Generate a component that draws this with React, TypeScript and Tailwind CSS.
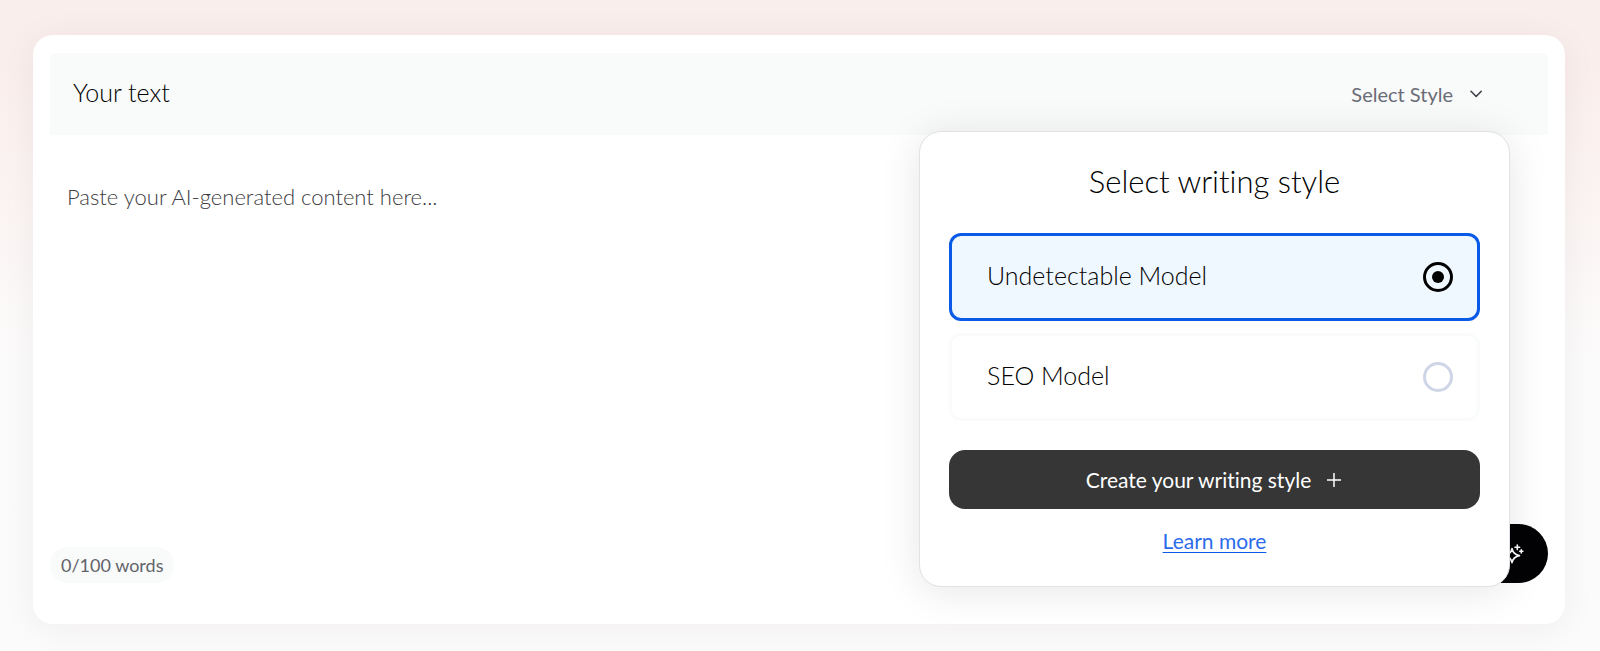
import { useState } from "react";

const models = ["Undetectable Model", "SEO Model"];

function ChevronIcon() {
  return (
    <svg width="14" height="14" viewBox="0 0 14 14" fill="none" stroke="#3f424d" strokeWidth="1.6" strokeLinecap="round" strokeLinejoin="round" aria-hidden="true">
      <path d="M2 4.300 7.200 9.500l5-5.200" />
    </svg>
  );
}

function PlusIcon() {
  return (
    <svg width="14" height="14" viewBox="0 0 14 14" stroke="#fff" strokeWidth="1.5" aria-hidden="true">
      <path d="M7 0v14M0 7h14" />
    </svg>
  );
}

function SparklesIcon() {
  return (
    <svg width="24" height="24" viewBox="0 0 24 24" fill="none" stroke="#fff" strokeWidth="1.6" strokeLinejoin="round" strokeLinecap="round" aria-hidden="true">
      <path d="M9 6.500c.9 4.500 2.800 6.200 7.500 7.100-4.700.9-6.600 2.600-7.500 7.100-.9-4.500-2.800-6.200-7.500-7.100 4.700-.9 6.600-2.600 7.500-7.100Z" />
      <path d="M14.300 3v4.600M12 5.300h4.600M18.300 7.700v3.200M16.700 9.300h3.200" />
    </svg>
  );
}

function StyleMenu() {
  const [selected, setSelected] = useState(models[0]);
  return (
    <section
      aria-labelledby="style-title"
      className="absolute right-[38px] top-[78px] z-10 w-[591px] rounded-[22px] border border-[#e1e1e6] bg-white px-[29px] pb-[29px] pt-[29px] text-center shadow-[0_4px_40px_rgba(0,0,0,0.1)]"
    >
      <h2 id="style-title" className="text-[31px] font-light leading-10 text-black">
        Select writing style
      </h2>
      <div role="radiogroup" aria-labelledby="style-title" className="mt-8 flex flex-col gap-3">
        {models.map((model) => (
          <label
            key={model}
            className="flex h-22 cursor-pointer items-center justify-between rounded-xl border-3 border-[#fafbfb] pl-[35px] pr-6 text-[25px] text-black has-checked:border-[#0a5ae8] has-checked:bg-[#eff7ff]"
          >
            <span className="pb-0.5 font-light">{model}</span>
            <input
              type="radio"
              name="model"
              checked={selected === model}
              onChange={() => setSelected(model)}
              className="flex size-[30px] appearance-none items-center justify-center rounded-full border-3 border-[#ced5e6] before:size-3 before:rounded-full checked:border-black checked:before:bg-black"
            />
          </label>
        ))}
      </div>
      <button type="button" className="mt-[29px] flex h-[59px] w-full items-center justify-center gap-4 rounded-2xl bg-[#363636] pr-0.5 text-[21px] text-white">
        Create your writing style
        <PlusIcon />
      </button>
      <a href="#learn" className="mt-4 inline-block text-[21px] leading-8 text-[#2b6cec] underline decoration-[#0a5ae8] decoration-1 underline-offset-3">
        Learn more
      </a>
    </section>
  );
}

export default function App() {
  return (
    <div className="flex min-h-screen flex-col bg-linear-to-b from-[#faeeec] from-10% to-[#fcfbfb] to-55% px-[33px] pb-[27px] pt-[35px] pr-[35px] font-['Lato','Liberation_Sans',sans-serif] [font-variant-ligatures:none]">
      <main className="flex flex-1 flex-col rounded-[20px] bg-white px-[17px] pb-[41px] pt-[18px] shadow-[0_4px_36px_rgba(40,20,0,0.055)]">
        <header className="relative flex h-[82px] items-center justify-between rounded-t-md bg-[#f9fafa] pl-[23px] pr-[65px]">
          <h1 className="pb-0.5 text-[25px] font-light text-black">
            <label htmlFor="source">Your text</label>
          </h1>
          <button type="button" aria-expanded="true" className="flex items-center gap-4 text-xl text-[#6a6c76]">
            Select Style
            <ChevronIcon />
          </button>
          <StyleMenu />
        </header>
        <textarea
          id="source"
          placeholder="Paste your AI-generated content here..."
          className="w-full flex-1 resize-none bg-transparent px-[17px] pt-12 text-[22px] font-light leading-7 text-black outline-none placeholder:text-[#3c3c42]"
        />
        <footer className="flex items-end justify-between">
          <p className="rounded-full bg-[#f9fafa] px-[11px] py-1 text-lg leading-7 text-[#626469]">0/100 words</p>
          <button type="button" aria-label="Humanize text" className="flex h-[59px] w-[230px] items-center justify-end rounded-full bg-[#030306] pr-[21px]">
            <SparklesIcon />
          </button>
        </footer>
      </main>
    </div>
  );
}
